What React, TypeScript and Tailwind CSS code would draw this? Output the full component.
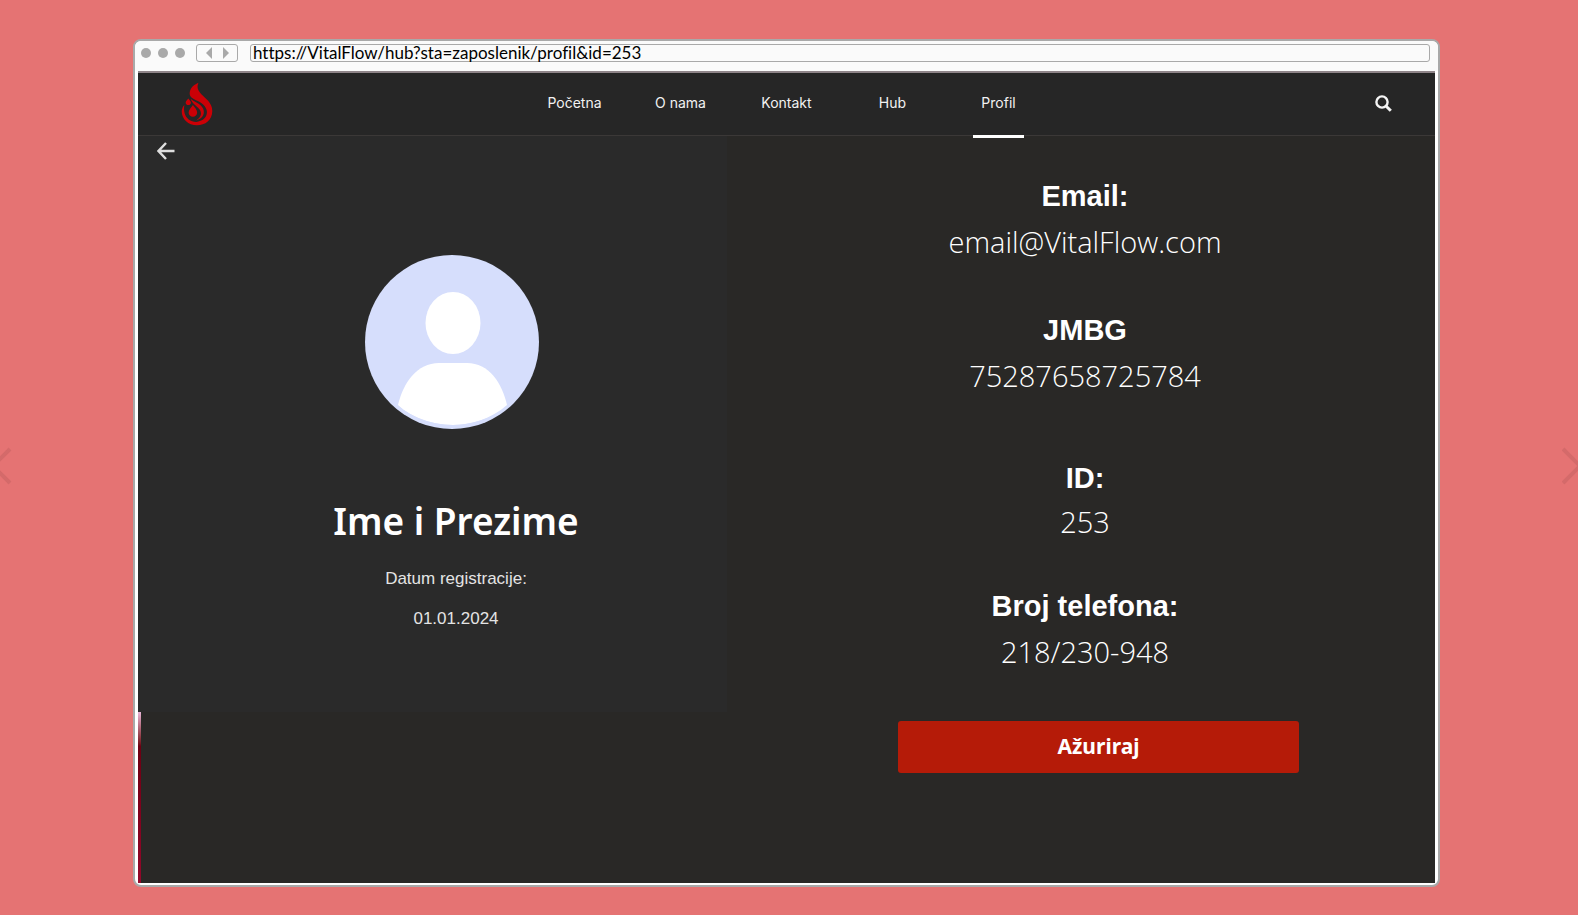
import React from "react";

const navItems = [
  { label: "Početna", active: false },
  { label: "O nama", active: false },
  { label: "Kontakt", active: false },
  { label: "Hub", active: false },
  { label: "Profil", active: true },
];

function Logo() {
  return (
    <svg viewBox="169 154 97 134" className="h-11 w-8" fill="#cb0006" aria-hidden="true">
      <path d="M222 156C213 175 227 187 241 201C257 215 264 227 264 243C264 269 243 286 217 286C191 286 171 267 171 244C171 236 174 229 179 224C176 242 180 258 192 268C207 279 228 278 241 264C252 251 249 235 237 223C224 211 203 208 197 197C191 182 201 164 222 156Z" />
      <path d="M198 205C210 216 228 219 236 235C243 251 235 266 215 271C228 262 233 252 227 240C221 229 204 222 198 205Z" />
      <path d="M205 224C210 231 218 238 218 247C218 255 212 260 205 260C198 260 192 255 192 247C192 238 201 231 205 224Z" />
      <path d="M191 204C194 208 199 212 199 217C199 221 195 224 191 224C187 224 183 221 183 217C183 212 188 208 191 204Z" />
    </svg>
  );
}

function Avatar() {
  return (
    <svg viewBox="0 0 174 174" className="size-[174px]" role="img" aria-label="Profil">
      <defs>
        <clipPath id="avatar-clip">
          <ellipse cx="88" cy="78" rx="90" ry="92" />
        </clipPath>
      </defs>
      <circle cx="87" cy="87" r="87" fill="#d6defc" />
      <ellipse cx="88" cy="68" rx="27.5" ry="31" fill="#fff" />
      <path
        d="M33 150C38 128 52 108 74 108H102C124 108 137 128 142 150C126 164 106 170 88 170C68 170 48 164 33 150Z"
        fill="#fff"
        clipPath="url(#avatar-clip)"
      />
    </svg>
  );
}

function Field({ label, value, tight = false }: { label: string; value: string; tight?: boolean }) {
  return (
    <div className={tight ? "flex flex-col" : "flex flex-col gap-0.5"}>
      <dt className="font-['Liberation_Sans',sans-serif] text-[29px] leading-[44px] font-bold">{label}</dt>
      <dd className="font-['Open_Sans',sans-serif] text-[29px] leading-[44px] font-light">{value}</dd>
    </div>
  );
}

function BrowserBar() {
  return (
    <div className="flex h-[30px] items-start bg-[#fafafa] pt-[3px] pr-[8px] pl-[6px]">
      <div className="flex h-[18px] items-center gap-[7px]">
        <span className="size-[10px] rounded-full bg-[#a9a9a9]" />
        <span className="size-[10px] rounded-full bg-[#a9a9a9]" />
        <span className="size-[10px] rounded-full bg-[#a9a9a9]" />
      </div>
      <div className="ml-[11px] flex h-[18px] w-[42px] items-center justify-center gap-[11px] rounded-[3px] border border-[#a9a9a9]">
        <button type="button" aria-label="Natrag">
          <svg viewBox="0 0 6 12" className="h-3 w-1.5" fill="#a9a9a9"><path d="M6 0V12L0 6Z" /></svg>
        </button>
        <button type="button" aria-label="Naprijed">
          <svg viewBox="0 0 6 12" className="h-3 w-1.5" fill="#a9a9a9"><path d="M0 0V12L6 6Z" /></svg>
        </button>
      </div>
      <label className="ml-3 flex h-[18px] min-w-0 flex-1 items-center rounded-[3px] border border-[#a9a9a9]">
        <input
          aria-label="Adresa"
          defaultValue="https://VitalFlow/hub?sta=zaposlenik/profil&id=253"
          className="h-6 w-full shrink-0 bg-transparent pb-0.5 pl-0.5 font-['Lato',sans-serif] text-[17px] leading-[22px] text-black outline-none [font-variant-ligatures:none]"
        />
      </label>
    </div>
  );
}

export default function App() {
  return (
    <div className="relative min-h-screen overflow-hidden bg-[#e57373] px-4 pt-[39px] pb-7 lg:pr-[138px] lg:pl-[133px]">
      <button type="button" aria-label="Prethodno" className="absolute top-[446px] -left-2">
        <svg viewBox="0 0 20 40" className="h-10 w-5" fill="none" stroke="#d46a6a" strokeWidth="4"><path d="M18 3L1 20L18 37" /></svg>
      </button>
      <button type="button" aria-label="Sljedeće" className="absolute top-[446px] -right-1">
        <svg viewBox="0 0 20 40" className="h-10 w-5" fill="none" stroke="#d46a6a" strokeWidth="4"><path d="M1 3L18 20L1 37" /></svg>
      </button>

      <div className="overflow-hidden rounded-lg border-2 border-[#a9a9a9] bg-white">
        <BrowserBar />
        <div className="mx-[3px] mb-0.5 bg-[#292826] text-white">
          <header className="flex h-[65px] items-center border-t-2 border-b border-t-[#8f8589] border-b-[#3b3837] bg-[#262626]">
            <div className="flex flex-1 pl-[43px]">
              <a href="#" aria-label="VitalFlow"><Logo /></a>
            </div>
            <nav className="grid h-full grid-cols-[repeat(5,106px)] text-center font-['Inter',sans-serif] text-[14px] text-[#f2f2f2]">
              {navItems.map((item) => (
                <a key={item.label} href="#" className="relative flex items-center justify-center pb-[3px]">
                  {item.label}
                  {item.active && <span className="absolute -bottom-[3px] h-[3px] w-[51px] bg-white" />}
                </a>
              ))}
            </nav>
            <div className="flex flex-1 justify-end pr-[43px] pb-0.5">
              <button type="button" aria-label="Traži">
                <svg viewBox="0 0 17 17" className="size-[17px]" fill="none" stroke="#f4f4f4">
                  <circle cx="7" cy="7" r="5.6" strokeWidth="2.4" />
                  <path d="M11.2 11.2L15.8 15.8" strokeWidth="3" />
                </svg>
              </button>
            </div>
          </header>

          <main className="grid grid-cols-[589fr_708fr]">
            <div className="flex flex-col">
              <section className="h-[576px] bg-[#2a2a2a]">
                <div className="flex h-[119px] items-start pt-[6px] pl-[19px]">
                  <a href="#" aria-label="Povratak">
                    <svg viewBox="0 0 18 18" className="size-[18px]" fill="none" stroke="#dedede" strokeWidth="2.4">
                      <path d="M17.5 9H2M9 1L1.5 9L9 17" />
                    </svg>
                  </a>
                </div>
                <div className="flex justify-center pl-[39px]">
                  <Avatar />
                </div>
                <div className="pt-16 pl-[47px] text-center">
                  <h1 className="font-['Noto_Sans',sans-serif] text-[37px] leading-[56px] font-semibold">Ime i Prezime</h1>
                  <div className="mt-[10px] font-['Liberation_Sans',sans-serif] text-[17px] leading-10 text-[#e4e4e4]">
                    <p>Datum registracije:</p>
                    <p>01.01.2024</p>
                  </div>
                </div>
              </section>
              <div className="w-[3px] flex-1 bg-linear-to-b from-[#e9b5d8] via-[#6d0012] via-20% to-[#93082a]" />
            </div>

            <section className="h-[747px] pt-[38px]">
              <dl className="flex flex-col pl-2 text-center">
                <Field label="Email:" value="email@VitalFlow.com" />
                <div className="mt-11"><Field label="JMBG" value="75287658725784" /></div>
                <div className="mt-[58px]"><Field label="ID:" value="253" tight /></div>
                <div className="mt-10"><Field label="Broj telefona:" value="218/230-948" /></div>
              </dl>
              <div className="mt-[47px] flex justify-center pl-[35px]">
                <button type="button" className="h-[52px] w-[401px] rounded-[3px] bg-[#b51b08] font-['Noto_Sans',sans-serif] text-[21px] font-bold">
                  Ažuriraj
                </button>
              </div>
            </section>
          </main>
        </div>
      </div>
    </div>
  );
}
